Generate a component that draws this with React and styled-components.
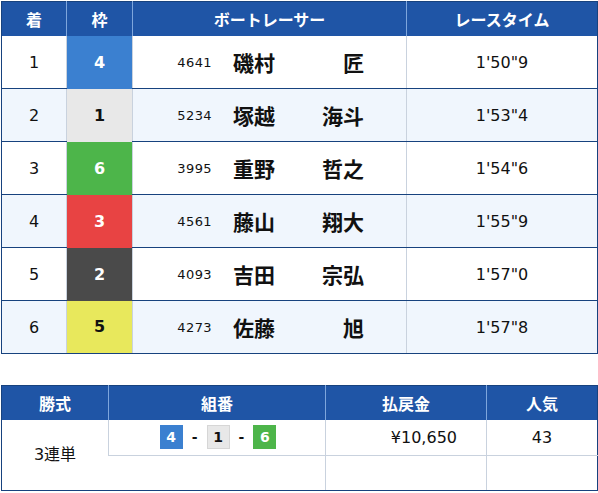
import React from 'react';
import styled, { createGlobalStyle } from 'styled-components';

const GlobalStyle = createGlobalStyle`
  html, body {
    margin: 0;
    padding: 0;
    background: #fff;
  }
  body {
    font-family: "DejaVu Sans", "Noto Sans CJK JP", sans-serif;
    color: #111;
  }
`

const Page = styled.div`
  padding: 1px 1px 0 1px;
  display: flex;
  flex-direction: column;
  gap: 31px;
`

const Table = styled.table`
  width: 596px;
  border-collapse: collapse;
  table-layout: fixed;
  border: 1px solid #17427e;
`

const HeadCell = styled.th`
  height: 34px;
  padding: 0;
  background: #1f55a6;
  color: #fff;
  font-family: "Noto Sans CJK JP", sans-serif;
  font-weight: 700;
  font-size: 16px;
  text-align: center;
  border-left: 1px solid #7ea6dc;
  &:first-child { border-left: none; }
`

const Row = styled.tr`
  background: ${props => props.shaded ? '#f0f6fd' : '#fff'};
`

const Cell = styled.td`
  height: 52px;
  padding: 0;
  font-size: 16px;
  text-align: center;
  border-bottom: 1px solid #17427e;
  border-left: 1px solid #c9d2de;
  &:first-child { border-left: none; }
`

const FrameCell = styled.td`
  padding: 0;
  background: ${props => props.bg};
  color: ${props => props.fg};
  font-weight: 700;
  font-size: 16px;
  text-align: center;
  border-left: 1px solid #c9d2de;
`

const Racer = styled.div`
  display: flex;
  align-items: center;
  padding-left: 43px;
`

const RacerNo = styled.span`
  width: 36px;
  font-size: 13px;
  letter-spacing: 0.4px;
  text-align: right;
  margin-right: 21px;
`

const Name = styled.span`
  width: 131px;
  display: flex;
  justify-content: space-between;
  font-family: "Noto Sans CJK JP", sans-serif;
  font-weight: 700;
  font-size: 21px;
  line-height: 1;
`

const PayCell = styled.td`
  height: ${props => props.h}px;
  padding: 0 ${props => props.pr || 0}px 0 0;
  font-size: 16px;
  text-align: ${props => props.align || 'center'};
  border-left: 1px solid #c9d2de;
  border-bottom: 1px solid ${props => props.last ? '#17427e' : '#c9d2de'};
  &:first-child { border-left: none; }
`

const KindCell = styled.td`
  padding: 0 0 4px 0;
  font-size: 16px;
  text-align: center;
  border-bottom: 1px solid #17427e;
`

const Combo = styled.div`
  display: flex;
  justify-content: center;
  align-items: center;
  gap: 9px;
  padding: 0 0 1px 2px;
`

const Badge = styled.span`
  width: 23px;
  height: 24px;
  box-sizing: border-box;
  display: flex;
  align-items: center;
  justify-content: center;
  background: ${props => props.bg};
  color: ${props => props.fg};
  border: 1px solid ${props => props.bd || props.bg};
  font-weight: 700;
  font-size: 14px;
`

const Dash = styled.span`
  font-weight: 700;
  font-size: 14px;
`

const frames = {
  1: { bg: '#e8e8e8', fg: '#111', bd: '#d6d6d6' },
  2: { bg: '#4a4a4a', fg: '#fff' },
  3: { bg: '#e84343', fg: '#fff' },
  4: { bg: '#3b80d0', fg: '#fff' },
  5: { bg: '#e8e85c', fg: '#111' },
  6: { bg: '#4db54a', fg: '#fff' },
}

const results = [
  { pos: 1, frame: 4, no: '4641', last: '磯村', first: '匠', time: `1'50"9` },
  { pos: 2, frame: 1, no: '5234', last: '塚越', first: '海斗', time: `1'53"4` },
  { pos: 3, frame: 6, no: '3995', last: '重野', first: '哲之', time: `1'54"6` },
  { pos: 4, frame: 3, no: '4561', last: '藤山', first: '翔大', time: `1'55"9` },
  { pos: 5, frame: 2, no: '4093', last: '吉田', first: '宗弘', time: `1'57"0` },
  { pos: 6, frame: 5, no: '4273', last: '佐藤', first: '旭', time: `1'57"8` },
]

export default function App() {
  return (
    <Page>
      <GlobalStyle />
      <Table>
        <colgroup>
          <col style={{ width: 65 }} />
          <col style={{ width: 66 }} />
          <col style={{ width: 274 }} />
          <col style={{ width: 191 }} />
        </colgroup>
        <thead>
          <tr>
            <HeadCell>着</HeadCell>
            <HeadCell>枠</HeadCell>
            <HeadCell>ボートレーサー</HeadCell>
            <HeadCell>レースタイム</HeadCell>
          </tr>
        </thead>
        <tbody>
          {results.map((r, i) => (
            <Row key={r.pos} shaded={i % 2 === 1}>
              <Cell>{r.pos}</Cell>
              <FrameCell bg={frames[r.frame].bg} fg={frames[r.frame].fg}>{r.frame}</FrameCell>
              <Cell>
                <Racer>
                  <RacerNo>{r.no}</RacerNo>
                  <Name><span>{r.last}</span><span>{r.first}</span></Name>
                </Racer>
              </Cell>
              <Cell>{r.time}</Cell>
            </Row>
          ))}
        </tbody>
      </Table>

      <Table>
        <colgroup>
          <col style={{ width: 107 }} />
          <col style={{ width: 217 }} />
          <col style={{ width: 161 }} />
          <col style={{ width: 111 }} />
        </colgroup>
        <thead>
          <tr>
            <HeadCell>勝式</HeadCell>
            <HeadCell>組番</HeadCell>
            <HeadCell>払戻金</HeadCell>
            <HeadCell>人気</HeadCell>
          </tr>
        </thead>
        <tbody>
          <tr>
            <KindCell rowSpan={2}>3連単</KindCell>
            <PayCell h={35}>
              <Combo>
                <Badge {...frames[4]}>4</Badge>
                <Dash>-</Dash>
                <Badge {...frames[1]}>1</Badge>
                <Dash>-</Dash>
                <Badge {...frames[6]}>6</Badge>
              </Combo>
            </PayCell>
            <PayCell h={35} align="right" pr={29}>¥10,650</PayCell>
            <PayCell h={35}>43</PayCell>
          </tr>
          <tr>
            <PayCell h={34} last />
            <PayCell h={34} last />
            <PayCell h={34} last />
          </tr>
        </tbody>
      </Table>
    </Page>
  );
}
